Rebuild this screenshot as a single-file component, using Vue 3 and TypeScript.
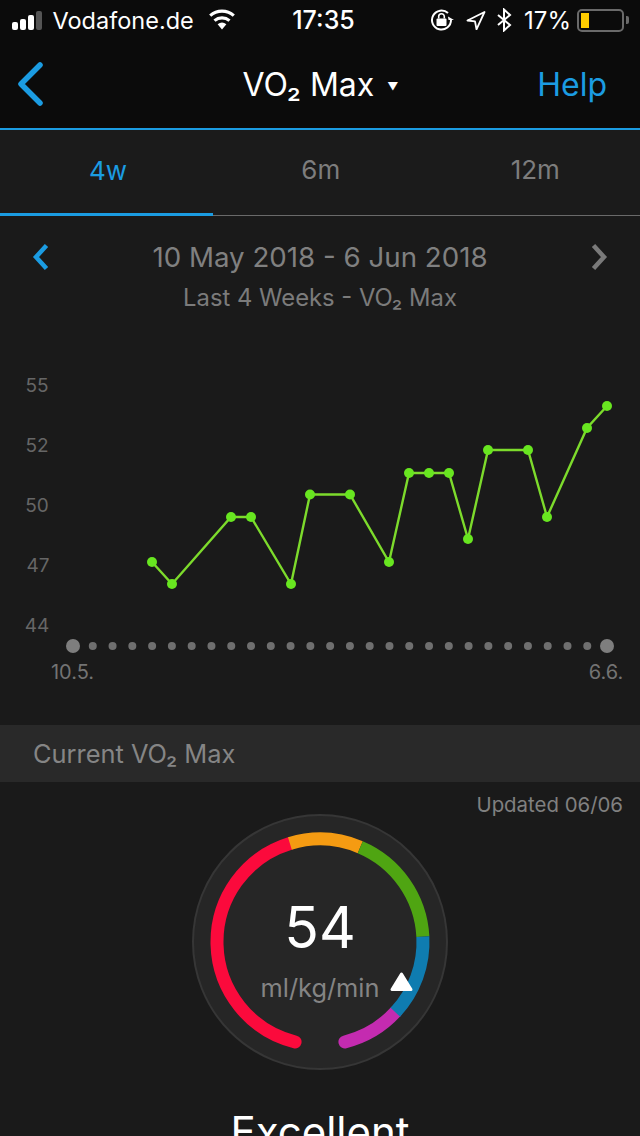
<script setup lang="ts">
const pts: [number, number][] = [
  [152, 562], [172, 584], [231, 517], [251, 517], [291, 584], [310, 494.5], [350, 494.5], [389, 562],
  [409, 473], [429, 473], [449, 473], [468, 539], [488, 450], [528, 450], [547, 517], [587, 428], [607, 406],
]
const CHART_TOP = 340
const line = pts.map(([x, y]) => `${x},${y - CHART_TOP}`).join(' ')
const axis = Array.from({ length: 26 }, (_, i) => 73 + (i + 1) * 19.78)
const yLabels = [
  { t: '55', y: 392, x: 37 }, { t: '52', y: 452, x: 37 }, { t: '50', y: 512, x: 37 }, { t: '47', y: 572, x: 38 }, { t: '44', y: 632, x: 37 },
]
const R = 103
const C = { x: 128, y: 128 }
function pt(a: number) {
  const r = (a * Math.PI) / 180
  return `${(C.x + R * Math.sin(r)).toFixed(2)} ${(C.y - R * Math.cos(r)).toFixed(2)}`
}
function arc(a: number, b: number) {
  return `M${pt(a)} A${R} ${R} 0 ${b - a > 180 ? 1 : 0} 1 ${pt(b)}`
}
const segs = [
  { d: arc(-166, -17), c: '#fb0a3c', cap: 'round' },
  { d: arc(132.600, 166), c: '#c42bb0', cap: 'round' },
  { d: arc(-17, 23), c: '#f59b12', cap: 'butt' },
  { d: arc(23, 87), c: '#4fa512', cap: 'butt' },
  { d: arc(87, 133), c: '#0f7cb0', cap: 'butt' },
]
</script>

<template>
  <div class="screen">
    <header class="top">
      <div class="status">
        <div class="st-left">
          <span class="bars"><i class="b1"></i><i class="b2"></i><i class="b3"></i><i class="b4"></i></span>
          <span class="carrier">Vodafone.de</span>
          <svg class="wifi" width="28" height="22" viewBox="0 0 28 22"><path d="M14 20.500 9.600 15.200a7 7 0 0 1 8.800 0Z" fill="#fff"/><path d="M6.500 11.600a11.600 11.600 0 0 1 15 0M2.200 6.600a18 18 0 0 1 23.600 0" fill="none" stroke="#fff" stroke-width="3.200"/></svg>
        </div>
        <div class="st-time">17:35</div>
        <div class="st-right">
          <svg width="24" height="24" viewBox="0 0 24 24"><path d="M21 12a9.500 9.500 0 1 1-3-6.900" fill="none" stroke="#fff" stroke-width="2"/><path d="M18 8.500 24 12h-5.500Z" fill="#fff"/><rect x="6.500" y="10.500" width="10" height="7.500" rx="1" fill="#fff"/><path d="M8.700 10.500V8.500a2.800 2.800 0 0 1 5.600 0v2" fill="none" stroke="#fff" stroke-width="1.600"/></svg>
          <svg class="loc" width="20" height="20" viewBox="0 0 20 20"><path d="M18.500 2 1.500 10.500l7.500.8 1.500 8Z" fill="none" stroke="#fff" stroke-width="1.800" stroke-linejoin="round"/></svg>
          <svg class="bt" width="16" height="24" viewBox="0 0 16 24"><path d="M2 7l12 10-6 5.500V1.500l6 5.500L2 17" fill="none" stroke="#fff" stroke-width="2"/></svg>
          <span class="pct">17%</span>
          <span class="batt"><span class="level"></span></span><span class="nub"></span>
        </div>
      </div>
      <nav class="nav">
        <svg class="back" width="30" height="46" viewBox="0 0 30 46"><path d="M25 4 6 23l19 19" fill="none" stroke="#1b9ce2" stroke-width="5.500" stroke-linecap="round" stroke-linejoin="round"/></svg>
        <div class="title">VO₂ Max <span class="caret">▼</span></div>
        <span class="help">Help</span>
      </nav>
    </header>

    <div class="tabs">
      <div class="tab active">4w</div>
      <div class="tab">6m</div>
      <div class="tab last">12m</div>
    </div>

    <section class="range">
      <div class="range-row">
        <svg width="18" height="26" viewBox="0 0 18 26"><path d="M15.500 1.500 5 13l10.500 11.500" fill="none" stroke="#1b9ce2" stroke-width="4.500" stroke-linejoin="miter"/></svg>
        <span class="dates">10 May 2018 - 6 Jun 2018</span>
        <svg width="18" height="26" viewBox="0 0 18 26"><path d="M2.500 1.500 13 13 2.500 24.500" fill="none" stroke="#7a7a7a" stroke-width="4.500" stroke-linejoin="miter"/></svg>
      </div>
      <div class="sub">Last 4 Weeks - VO₂ Max</div>
    </section>

    <svg class="chart" width="640" height="346" viewBox="0 0 640 346">
      <text v-for="l in yLabels" :key="l.t" :x="l.x" :y="l.y - CHART_TOP" class="ylab" text-anchor="middle">{{ l.t }}</text>
      <circle cx="73" :cy="646 - CHART_TOP" r="7" fill="#7e7e7e" />
      <circle v-for="x in axis" :key="x" :cx="x" :cy="646 - CHART_TOP" r="4" fill="#6f6f6f" />
      <circle cx="607" :cy="646 - CHART_TOP" r="7" fill="#7e7e7e" />
      <polyline :points="line" fill="none" stroke="#7ddb2c" stroke-width="2.400" />
      <circle v-for="p in pts" :key="p[0]" :cx="p[0]" :cy="p[1] - CHART_TOP" r="5" fill="#68e620" />
      <text x="72.500" :y="679 - CHART_TOP" class="xlab" text-anchor="middle">10.5.</text>
      <text x="606" :y="679 - CHART_TOP" class="xlab" text-anchor="middle">6.6.</text>
    </svg>

    <div class="band">Current VO₂ Max</div>
    <div class="updated">Updated 06/06</div>

    <div class="gauge">
      <svg width="256" height="256" viewBox="0 0 256 256">
        <circle cx="128" cy="128" r="127" fill="#262626" stroke="#363636" stroke-width="2" />
        <path v-for="s in segs" :key="s.c" :d="s.d" fill="none" :stroke="s.c" stroke-width="13" :stroke-linecap="(s.cap as 'round' | 'butt')" />
        <path d="M209.500 160 200 175.500h19Z" fill="#fff" stroke="#fff" stroke-width="3" stroke-linejoin="round" />
      </svg>
      <div class="g-center">
        <div class="g-val">54</div>
        <div class="g-unit">ml/kg/min</div>
      </div>
    </div>

    <div class="verdict">Excellent</div>
  </div>
</template>

<style>
html, body { margin: 0; background: #1a1a1a; }
</style>

<style scoped>
.screen {
  width: 640px;
  height: 1136px;
  overflow: hidden;
  background: #1a1a1a;
  font-family: Inter, "Liberation Sans", sans-serif;
  color: #fff;
}
.top {
  height: 130px;
  box-sizing: border-box;
  background: #0b0b0b;
  border-bottom: 2px solid #1b9ce2;
}
.status {
  height: 40px;
  display: grid;
  grid-template-columns: 1fr auto 1fr;
  align-items: center;
  font-size: 24px;
}
.st-left { display: flex; align-items: center; padding-left: 12px; }
.bars { display: flex; align-items: flex-end; gap: 2.500px; height: 19px; }
.bars i { display: block; width: 5.500px; border-radius: 2px; background: #fff; }
.b1 { height: 8px; }
.b2 { height: 11px; }
.b3 { height: 15px; }
.b4 { height: 19px; background: #555 !important; }
.carrier { margin-left: 11px; font-size: 23.500px; }
.wifi { margin-left: 14px; }
.st-time { font-size: 25px; font-weight: 500; margin-left: 7px; }
.st-right { display: flex; align-items: center; justify-content: flex-end; padding-right: 11px; }
.loc { margin-left: 12px; }
.bt { margin-left: 10px; }
.pct { margin-left: 12px; }
.batt {
  display: block;
  width: 47px;
  height: 23px;
  box-sizing: border-box;
  margin-left: 6px;
  border: 2px solid #6a6a6a;
  border-radius: 5px;
  padding: 2px;
}
.level { display: block; width: 8px; height: 100%; background: #ffcc00; }
.nub { width: 3px; height: 8px; margin-left: 2px; background: #6a6a6a; border-radius: 0 2px 2px 0; }
.nav {
  height: 88px;
  position: relative;
  display: flex;
  align-items: center;
  justify-content: space-between;
  padding: 0 33px 0 15px;
}
.title {
  position: absolute;
  left: 0;
  right: 0;
  padding-left: 1px;
  text-align: center;
  font-size: 32px;
  pointer-events: none;
}
.caret { font-size: 11px; vertical-align: 6px; margin-left: 4px; }
.help { color: #1b9ce2; font-size: 32px; }
.tabs {
  display: flex;
  height: 86px;
  box-sizing: border-box;
  background: #1b1b1b;
  border-bottom: 1px solid #6a6a6a;
}
.tab {
  flex: 1;
  display: flex;
  align-items: center;
  justify-content: center;
  font-size: 26px;
  color: #7d7d7d;
  padding: 0 0 6px 3px;
  box-sizing: border-box;
}
.tab.last { padding-left: 5px; }
.tab.active {
  flex: 0 0 213px;
  color: #1b9ce2;
  border-bottom: 3px solid #1b9ce2;
  margin-bottom: -1px;
  padding-bottom: 3px;
}
.range { height: 124px; box-sizing: border-box; padding-top: 24px; text-align: center; }
.range-row {
  display: flex;
  align-items: center;
  justify-content: space-between;
  padding: 0 31px;
  height: 34px;
}
.dates { font-size: 27.700px; color: #808080; }
.sub { font-size: 23.800px; color: #7b7b7b; margin-top: 9px; }
.chart { display: block; height: 346px; }
.ylab, .xlab { font-size: 19px; fill: #666; font-family: Inter, "Liberation Sans", sans-serif; }
.xlab { font-size: 20px; fill: #737373; }
.band {
  height: 57px;
  margin-top: 39px;
  box-sizing: border-box;
  display: flex;
  align-items: center;
  padding-left: 33px;
  background: #292929;
  color: #858585;
  font-size: 25.400px;
}
.updated { text-align: right; padding: 10px 17px 0 0; font-size: 20.400px; color: #808080; height: 32px; box-sizing: border-box; }
.gauge { position: relative; width: 256px; height: 256px; margin: 0 auto; }
.gauge svg { display: block; }
.g-center { position: absolute; inset: 0; text-align: center; }
.g-val { font-size: 57px; padding-top: 78px; line-height: 72px; }
.g-unit { font-size: 25.400px; color: #848484; line-height: 30px; margin-top: 9px; }
.verdict { text-align: center; font-size: 42px; margin-top: 36px; }
</style>
